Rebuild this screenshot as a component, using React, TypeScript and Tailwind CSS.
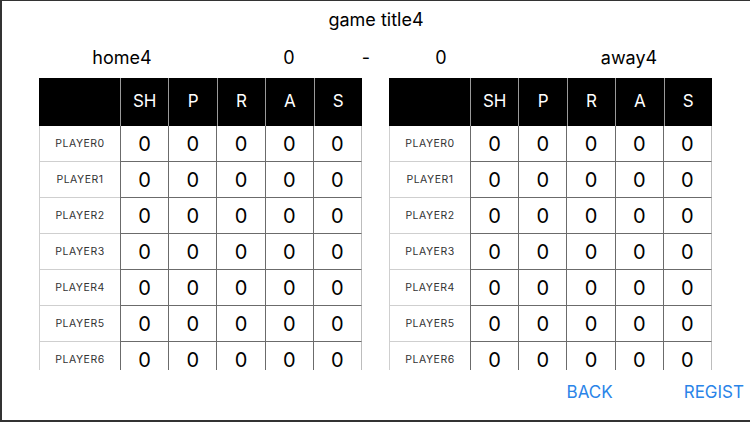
const columns = ["SH", "P", "R", "A", "S"];
const players = ["PLAYER0", "PLAYER1", "PLAYER2", "PLAYER3", "PLAYER4", "PLAYER5", "PLAYER6"];

const StatsTable = () => {
    return (
        <div className="w-[323px] h-[292px] overflow-hidden">
            <div className="flex h-[48px] bg-black text-white text-[17px]">
                <div className="w-[81px]" />
                {columns.map((col) => (
                    <div key={col} className="flex-1 flex items-center justify-center border-l border-[#9a9a9a]">
                        {col}
                    </div>
                ))}
            </div>
            {players.map((player) => (
                <div key={player} className="flex h-[36px]">
                    <div className="w-[81px] flex items-center justify-center pt-[2px] leading-none border-l border-b border-[#cfcfcf] text-[10.5px] tracking-[0.5px] text-[#333]">
                        {player}
                    </div>
                    {columns.map((col) => (
                        <div
                            key={col}
                            className="flex-1 flex items-center justify-center leading-none border-l border-b border-[#6b6b6b] last:border-r last:border-r-[#bdbdbd] text-[20px] text-black"
                        >
                            0
                        </div>
                    ))}
                </div>
            ))}
        </div>
    );
};

export default function App() {
    return (
        <div
            className="w-[750px] h-[422px] bg-white border-t border-l-2 border-b-2 border-[#333] flex flex-col overflow-hidden"
            style={{ fontFamily: "Inter, 'Liberation Sans', sans-serif" }}
        >
            <div className="h-[36px] flex items-center justify-center text-[18px] text-black">
                game title4
            </div>
            <div className="h-[40px] flex items-center text-[18px] text-black">
                <div className="w-[240px] text-center">home4</div>
                <div className="w-[94px] text-center">0</div>
                <div className="w-[60px] text-center">-</div>
                <div className="w-[90px] text-center">0</div>
                <div className="w-[200px] ml-[43px] text-center">away4</div>
            </div>
            <div className="flex gap-[27px] pl-[37px] mt-[1px]">
                <StatsTable />
                <StatsTable />
            </div>
            <div className="flex justify-end items-center gap-[71px] pr-[6px] h-[46px] text-[17px] text-[#2a84e8]">
                <span>BACK</span>
                <span>REGIST</span>
            </div>
        </div>
    );
}
